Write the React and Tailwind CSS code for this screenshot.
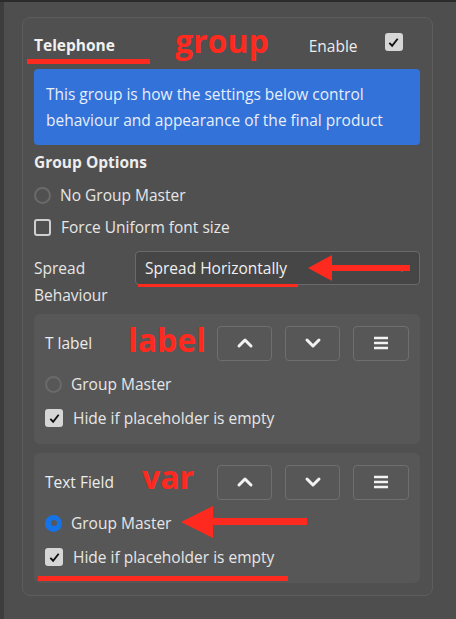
import React from 'react';

const font = { fontFamily: '"Open Sans", "Noto Sans", sans-serif' };

const Check = () => (
    <span className="w-[18px] h-[18px] rounded-[3px] bg-[#d6d6d6] flex items-center justify-center shrink-0">
        <svg width="13" height="13" viewBox="0 0 14 14">
            <path d="M2.5 7.5 L5.5 10.5 L11.5 3" fill="none" stroke="#111" strokeWidth="2" />
        </svg>
    </span>
);

const Chevron = ({ up }) => (
    <svg width="18" height="12" viewBox="0 0 18 12">
        <path d={up ? 'M3 9 L9 3 L15 9' : 'M3 3 L9 9 L15 3'} fill="none" stroke="#f2f2f2" strokeWidth="3" strokeLinecap="round" strokeLinejoin="round" />
    </svg>
);

const Card = ({ title, note, noteClass, master }) => (
    <div className="bg-[#575757] rounded-md pl-[11px] pr-[11px] pt-[12px] pb-[15px]">
        <div className="flex items-center h-[34px]">
            <span className="text-[15.5px] text-[#ececec] w-[83px]">{title}</span>
            <span className={`text-[#ff2a1f] font-bold leading-none ${noteClass}`}>{note}</span>
            <div className="ml-auto flex gap-[13px]">
                <button className="w-[55px] h-[35px] rounded-[4px] border border-[#6f6f6f] flex items-center justify-center"><Chevron up /></button>
                <button className="w-[55px] h-[35px] rounded-[4px] border border-[#6f6f6f] flex items-center justify-center"><Chevron /></button>
                <button className="w-[56px] h-[35px] rounded-[4px] border border-[#6f6f6f] flex items-center justify-center">
                    <svg width="16" height="14" viewBox="0 0 16 14"><path d="M1 2h14M1 7h14M1 12h14" stroke="#f2f2f2" strokeWidth="2.4" /></svg>
                </button>
            </div>
        </div>
        <div className="relative flex items-center gap-[9px] mt-[13px] h-[22px]">
            {master ? (
                <span className="w-[17px] h-[17px] rounded-full bg-[#1473e6] flex items-center justify-center"><span className="w-[6px] h-[6px] rounded-full bg-[#575757]" /></span>
            ) : (
                <span className="w-[17px] h-[17px] rounded-full border-2 border-[#6a6a6a]" />
            )}
            <span className="text-[15.5px] text-[#e6e6e6]">Group Master</span>
            {master && (
                <svg className="absolute left-[136px] top-[-6px]" width="126" height="34" viewBox="0 0 126 34">
                    <path d="M0 16 L32 0 L32 12 L126 12 L126 19 L32 19 L32 32 Z" fill="#ff2a1f" />
                </svg>
            )}
        </div>
        <div className="relative flex items-center gap-[10px] mt-[12px] h-[22px]">
            <Check />
            <span className="text-[15.5px] text-[#e6e6e6]">Hide if placeholder is empty</span>
            {master && <span className="absolute left-[-7px] top-[30px] w-[250px] h-[5px] bg-[#ff2a1f]" />}
        </div>
    </div>
);

export default function App() {
    return (
        <div style={font} className="w-[456px] h-[619px] bg-[#4e4e4e] border-t-2 border-[#2b2b2b] flex overflow-hidden">
            <div className="w-[4px] bg-[#3d3d3d] shrink-0" />
            <div className="flex-1 pl-[18px] pr-[23px] pt-[15px]">
                <div className="border border-[#5d5d5d] rounded-lg bg-[#505050] pl-[11px] pr-[12px] pt-[14px] pb-[12px]">
                    {/* header */}
                    <div className="flex items-center h-[28px] relative">
                        <span className="text-[15.5px] font-bold text-[#f0f0f0]">Telephone</span>
                        <span className="absolute left-[-7px] top-[27px] w-[123px] h-[5px] bg-[#ff2a1f]" />
                        <span className="ml-[60px] text-[32px] font-bold text-[#ff2a1f] leading-none -mt-[10px]">group</span>
                        <span className="ml-[40px] text-[15.5px] text-[#ececec] mt-[2px]">Enable</span>
                        <span className="ml-[27px] -mt-[8px]"><Check /></span>
                    </div>
                    <div className="mt-[9px] bg-[#3272d9] rounded-[4px] px-[12px] pt-[12px] pb-[12px] text-[15.5px] leading-[26px] text-[#e8eefa]">
                        This group is how the settings below control behaviour and appearance of the final product
                    </div>
                    <div className="mt-[6px] text-[15.5px] font-bold text-[#ededed]">Group Options</div>
                    <div className="flex items-center gap-[9px] mt-[10px] h-[22px]">
                        <span className="w-[17px] h-[17px] rounded-full border-2 border-[#6a6a6a]" />
                        <span className="text-[15.5px] text-[#e6e6e6]">No Group Master</span>
                    </div>
                    <div className="flex items-center gap-[10px] mt-[10px] h-[22px]">
                        <span className="w-[17px] h-[17px] rounded-[3px] border-2 border-[#cfcfcf]" />
                        <span className="text-[15.5px] text-[#e6e6e6]">Force Uniform font size</span>
                    </div>
                    <div className="flex mt-[13px]">
                        <div className="w-[101px] pt-[4px] text-[15.5px] leading-[27px] text-[#e6e6e6]">Spread<br />Behaviour</div>
                        <div className="relative flex-1 h-[34px] mt-[0px] rounded-[4px] border border-[#6a6a6a] bg-[#464646] flex items-center pl-[9px]">
                            <span className="text-[15.5px] text-[#f0f0f0]">Spread Horizontally</span>
                            <svg className="absolute right-[12px] top-[14px]" width="10" height="6" viewBox="0 0 10 6"><path d="M0 0 L10 0 L5 6 Z" fill="#8a8a8a" /></svg>
                            <svg className="absolute left-[172px] top-[3px]" width="104" height="26" viewBox="0 0 104 26">
                                <path d="M0 13 L24 0 L24 10 L102 10 L102 16 L24 16 L24 26 Z" fill="#ff2a1f" />
                            </svg>
                            <span className="absolute left-[2px] top-[32px] w-[160px] h-[3px] bg-[#ff2a1f]" />
                        </div>
                    </div>
                    <div className="mt-[5px] flex flex-col gap-[9px]">
                        <Card title="T label" note="label" noteClass="text-[32px] -mt-[6px] ml-[0px]" />
                        <Card title="Text Field" note="var" noteClass="text-[32px] -mt-[10px] ml-[14px]" master />
                    </div>
                </div>
            </div>
        </div>
    );
}
